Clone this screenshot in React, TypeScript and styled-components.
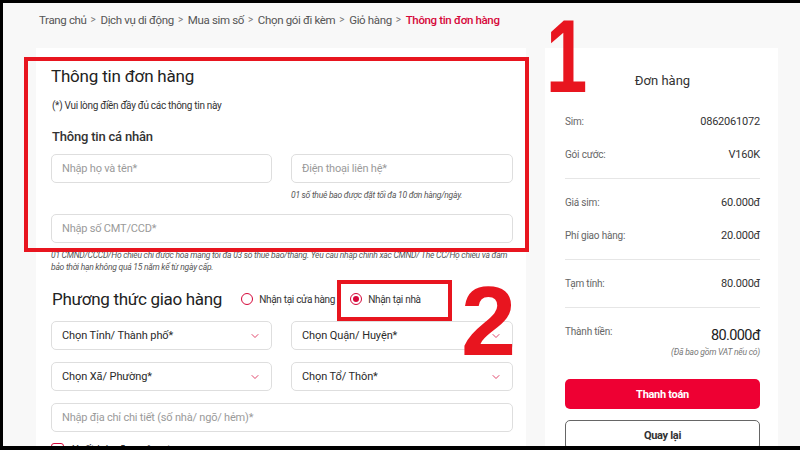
import React from 'react';
import styled, {createGlobalStyle} from 'styled-components';
import {ChevronDown} from 'lucide-react';

const GlobalStyle = createGlobalStyle`
  html, body {
    margin: 0;
    padding: 0;
    background: #000;
  }
  * {
    box-sizing: border-box;
  }
`;

const Frame = styled.div`
  width: 800px;
  height: 450px;
  overflow: hidden;
  background: #000;
  padding: 3px 0 4px 3px;
`;

const Page = styled.div`
  position: relative;
  height: 100%;
  overflow: hidden;
  background: #f8f8f8;
  font-family: Roboto, "Noto Sans", sans-serif;
  color: #333;
  padding-left: 33px;
`;

const Breadcrumb = styled.div`
  height: 45px;
  display: flex;
  align-items: center;
  padding: 0 0 12px 3px;
  font-size: 11.5px;
  letter-spacing: -0.35px;
  color: #555;

  span.current {
    color: #d6083a;
    font-weight: 500;
  }
`;

const Sep = styled.span`
  color: #777;
  font-size: 10px;
  margin: 0 5px 0 4px;
`;

const Columns = styled.div`
  display: flex;
  gap: 19px;
  align-items: flex-start;
`;

const FormCard = styled.div`
  width: 490px;
  height: 420px;
  background: #fff;
  padding: 16px 13px 0 15px;
`;

const Title = styled.h1`
  margin: 0;
  font-size: 17px;
  letter-spacing: -0.2px;
  line-height: 24px;
  font-weight: 400;
  color: #222;
`;

const Note = styled.p`
  margin: 11px 0 0 1px;
  font-size: 10px;
  letter-spacing: -0.3px;
  line-height: 14px;
  color: #333;
`;

const SubTitle = styled.h2`
  margin: 15px 0 0 1px;
  font-size: 13px;
  letter-spacing: -0.2px;
  line-height: 18px;
  font-weight: 500;
  color: #333;
`;

const Grid = styled.div<{$top: number}>`
  display: grid;
  grid-template-columns: 221px 222px;
  column-gap: 19px;
  margin-top: ${p => p.$top}px;
`;

const Field = styled.div<{$wide?: boolean}>`
  height: 29px;
  border: 1px solid #dedede;
  border-radius: 5px;
  display: flex;
  align-items: center;
  justify-content: space-between;
  padding: 0 10px;
  font-size: 11px;
  letter-spacing: -0.2px;
  color: #9a9a9a;
  background: #fff;
  ${p => p.$wide && 'grid-column: 1 / 3;'}
`;

const SelectField = styled(Field)`
  color: #2a2a2a;
  letter-spacing: -0.1px;
`;

const Hint = styled.div<{$col?: number}>`
  font-size: 8.5px;
  letter-spacing: -0.25px;
  line-height: 12px;
  font-style: italic;
  color: #555;
  margin-top: 6px;
  ${p => p.$col === 2 && 'grid-column: 2 / 3;'}
  ${p => p.$col === 0 && 'grid-column: 1 / 3;'}
`;

const DeliveryRow = styled.div`
  display: flex;
  align-items: center;
  margin-top: 13px;
  height: 26px;
`;

const DeliveryTitle = styled.h2`
  margin: 0 19px 0 1px;
  font-size: 17px;
  letter-spacing: -0.3px;
  font-weight: 400;
  color: #222;
`;

const RadioOption = styled.label`
  display: flex;
  align-items: center;
  gap: 6px;
  font-size: 10px;
  letter-spacing: -0.3px;
  color: #333;
  margin-right: 15px;
`;

const RadioDot = styled.span<{$checked?: boolean}>`
  width: 12px;
  height: 12px;
  border-radius: 50%;
  border: 1.5px solid #d6083a;
  display: flex;
  align-items: center;
  justify-content: center;

  &::after {
    content: '';
    width: 6px;
    height: 6px;
    border-radius: 50%;
    background: ${p => (p.$checked ? '#d6083a' : 'transparent')};
  }
`;

const CheckRow = styled.div`
  display: flex;
  align-items: center;
  gap: 8px;
  margin-top: 11px;
  font-size: 11px;
  color: #333;
`;

const CheckBox = styled.span`
  width: 13px;
  height: 13px;
  border: 1.5px solid #d6083a;
  border-radius: 3px;
`;

const OrderCard = styled.div`
  width: 233px;
  height: 420px;
  background: #fff;
  padding: 23px 18px 0 20px;
`;

const OrderTitle = styled.div`
  text-align: center;
  font-size: 13px;
  line-height: 20px;
  color: #333;
  margin-bottom: 7px;
`;

const Group = styled.div`
  padding: 7px 0;
  border-bottom: 1px solid #e6e6e6;

  &:last-of-type {
    border-bottom: none;
  }
`;

const Line = styled.div`
  height: 33px;
  display: flex;
  align-items: center;
  justify-content: space-between;
`;

const TotalLine = styled.div`
  display: flex;
  align-items: flex-start;
  justify-content: space-between;
  line-height: 33px;
`;

const Label = styled.span`
  font-size: 10px;
  letter-spacing: -0.2px;
  color: #666;
`;

const Value = styled.span`
  font-size: 11px;
  letter-spacing: -0.2px;
  color: #333;
`;

const TotalBox = styled.div`
  display: flex;
  flex-direction: column;
  align-items: flex-end;
  padding-top: 11px;
`;

const TotalValue = styled.span`
  font-size: 14.5px;
  letter-spacing: -0.6px;
  color: #222;
  line-height: 20px;
`;

const VatNote = styled.span`
  font-size: 8.5px;
  letter-spacing: -0.2px;
  font-style: italic;
  color: #777;
  line-height: 12px;
`;

const Button = styled.button<{$primary?: boolean}>`
  display: block;
  width: 100%;
  height: 30px;
  border-radius: 5px;
  font-family: Roboto, sans-serif;
  font-size: 11px;
  letter-spacing: -0.3px;
  font-weight: 700;
  cursor: pointer;
  background: ${p => (p.$primary ? '#ee0033' : '#fff')};
  color: ${p => (p.$primary ? '#fff' : '#333')};
  border: ${p => (p.$primary ? 'none' : '1px solid #666')};
  margin-top: ${p => (p.$primary ? '14px' : '11px')};
`;

// annotation overlays drawn on the screenshot
const MarkBox = styled.div<{$l: number; $t: number; $w: number; $h: number}>`
  position: absolute;
  left: ${p => p.$l}px;
  top: ${p => p.$t}px;
  width: ${p => p.$w}px;
  height: ${p => p.$h}px;
  border: 4px solid #e8151f;
  pointer-events: none;
`;

const MarkNum = styled.div<{$l: number; $t: number; $size: number; $sx?: number}>`
  position: absolute;
  left: ${p => p.$l}px;
  top: ${p => p.$t}px;
  font-family: "Liberation Sans", Arial, sans-serif;
  font-weight: 700;
  font-size: ${p => p.$size}px;
  line-height: 1;
  color: #e8151f;
  transform: scaleX(${p => p.$sx ?? 1});
  transform-origin: left top;
`;

const crumbs = ['Trang chủ', 'Dịch vụ di động', 'Mua sim số', 'Chọn gói đi kèm', 'Giỏ hàng'];

const Chevron = () => <ChevronDown size={12} color="#d6083a" strokeWidth={1.5} />;

const App = () => {
    return (
        <Frame>
            <GlobalStyle/>
            <Page>
                <Breadcrumb>
                    {crumbs.map(c => (
                        <React.Fragment key={c}>
                            <span>{c}</span>
                            <Sep>&gt;</Sep>
                        </React.Fragment>
                    ))}
                    <span className="current">Thông tin đơn hàng</span>
                </Breadcrumb>

                <Columns>
                    <FormCard>
                        <Title>Thông tin đơn hàng</Title>
                        <Note>(*) Vui lòng điền đầy đủ các thông tin này</Note>
                        <SubTitle>Thông tin cá nhân</SubTitle>

                        <Grid $top={8}>
                            <Field>Nhập họ và tên*</Field>
                            <Field>Điện thoại liên hệ*</Field>
                            <Hint $col={2}>01 số thuê bao được đặt tối đa 10 đơn hàng/ngày.</Hint>
                        </Grid>
                        <Grid $top={13}>
                            <Field $wide>Nhập số CMT/CCD*</Field>
                            <Hint $col={0}>
                                01 CMND/CCCD/Hộ chiếu chỉ được hòa mạng tối đa 03 số thuê bao/tháng. Yêu cầu nhập chính xác CMND/ Thẻ CC/Hộ chiếu và đảm bảo thời hạn không quá 15 năm kể từ ngày cấp.
                            </Hint>
                        </Grid>

                        <DeliveryRow>
                            <DeliveryTitle>Phương thức giao hàng</DeliveryTitle>
                            <RadioOption><RadioDot/>Nhận tại cửa hàng</RadioOption>
                            <RadioOption><RadioDot $checked/>Nhận tại nhà</RadioOption>
                        </DeliveryRow>

                        <Grid $top={9}>
                            <SelectField>Chọn Tỉnh/ Thành phố*<Chevron/></SelectField>
                            <SelectField>Chọn Quận/ Huyện*<Chevron/></SelectField>
                        </Grid>
                        <Grid $top={12}>
                            <SelectField>Chọn Xã/ Phường*<Chevron/></SelectField>
                            <SelectField>Chọn Tổ/ Thôn*<Chevron/></SelectField>
                        </Grid>
                        <Grid $top={12}>
                            <Field $wide>Nhập địa chỉ chi tiết (số nhà/ ngõ/ hẻm)*</Field>
                        </Grid>
                        <CheckRow><CheckBox/>Xuất hóa đơn công ty</CheckRow>
                    </FormCard>

                    <OrderCard>
                        <OrderTitle>Đơn hàng</OrderTitle>
                        <Group>
                            <Line><Label>Sim:</Label><Value>0862061072</Value></Line>
                            <Line><Label>Gói cước:</Label><Value>V160K</Value></Line>
                        </Group>
                        <Group>
                            <Line><Label>Giá sim:</Label><Value>60.000đ</Value></Line>
                            <Line><Label>Phí giao hàng:</Label><Value>20.000đ</Value></Line>
                        </Group>
                        <Group>
                            <Line><Label>Tạm tính:</Label><Value>80.000đ</Value></Line>
                        </Group>
                        <Group>
                            <TotalLine>
                                <Label>Thành tiền:</Label>
                                <TotalBox>
                                    <TotalValue>80.000đ</TotalValue>
                                    <VatNote>(Đã bao gồm VAT nếu có)</VatNote>
                                </TotalBox>
                            </TotalLine>
                        </Group>
                        <Button $primary>Thanh toán</Button>
                        <Button>Quay lại</Button>
                    </OrderCard>
                </Columns>

                <MarkBox $l={21} $t={54} $w={505} $h={195}/>
                <MarkBox $l={334} $t={277} $w={115} $h={41}/>
                <MarkNum $l={543} $t={2} $size={103} $sx={0.72}>1</MarkNum>
                <MarkNum $l={458} $t={268} $size={99}>2</MarkNum>
            </Page>
        </Frame>
    );
};

export default App;
